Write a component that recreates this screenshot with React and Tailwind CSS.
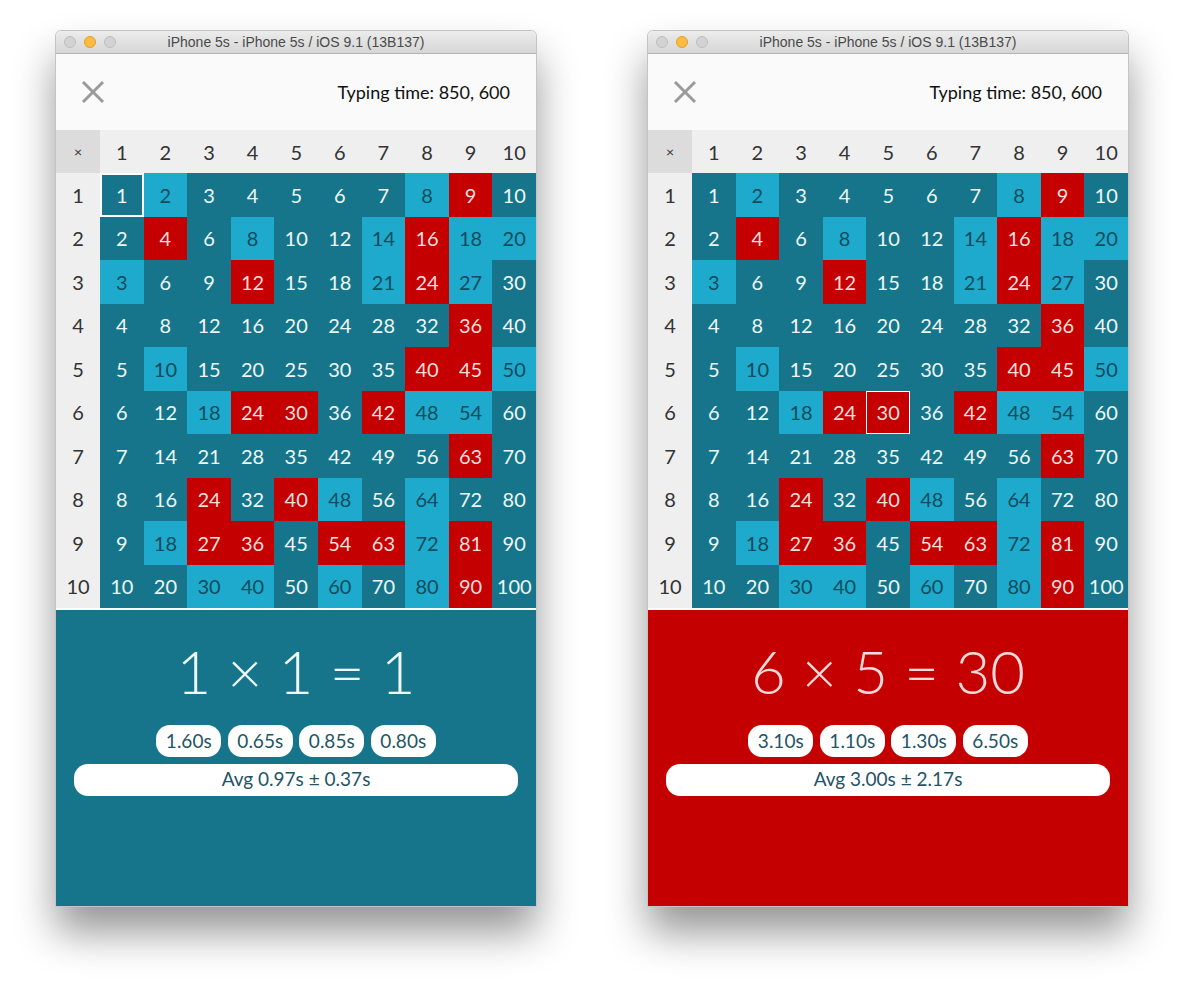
import React from 'react';

// d = dark teal, l = light blue, r = red
const PATTERN = [
  'dldddddlrd',
  'drdlddlrll',
  'lddrddlrld',
  'ddddddddrd',
  'dldddddrrl',
  'ddlrrdrlld',
  'ddddddddrd',
  'ddrdrldldd',
  'dlrrdrrlrd',
  'ddlldldlrd',
];

const cellStyles = {
  d: 'bg-[#16758a] text-[#eef8fa]',
  l: 'bg-[#1eaacd] text-[#0f4c5c]',
  r: 'bg-[#c40000] text-[#ffdede]',
};

const XIcon = () => (
  <svg width="24" height="24" viewBox="0 0 24 24" className="text-[#9a9a9a]">
    <path d="M2 2 L22 22 M22 2 L2 22" stroke="currentColor" strokeWidth="3" fill="none" />
  </svg>
);

const Window = ({ sel, selBorder, panelBg, eqColor, equation, times, avg }) => {
  const cols = [1, 2, 3, 4, 5, 6, 7, 8, 9, 10];
  return (
    <div className="w-[480px] flex flex-col rounded-t-[5px] overflow-hidden ring-1 ring-[#c4c4c4] shadow-[0_26px_42px_rgba(0,0,0,0.42)]">
      {/* title bar */}
      <div className="h-[23px] flex items-center bg-gradient-to-b from-[#ececec] to-[#d6d6d6] border-b border-[#b4b4b4]">
        <div className="flex items-center gap-[8px] pl-[8px]">
          <span className="w-[12px] h-[12px] rounded-full bg-[#d3d3d3] border border-[#bcbcbc]" />
          <span className="w-[12px] h-[12px] rounded-full bg-[#fdbc40] border border-[#de9f34]" />
          <span className="w-[12px] h-[12px] rounded-full bg-[#d3d3d3] border border-[#bcbcbc]" />
        </div>
        <div className="flex-1 text-center pr-[60px] text-[14px] text-[#4a4a4a]" style={{ fontFamily: '"Liberation Sans", Arial, sans-serif' }}>
          iPhone 5s - iPhone 5s / iOS 9.1 (13B137)
        </div>
      </div>

      <div style={{ fontFamily: 'Lato, "Noto Sans", sans-serif' }}>
        {/* header */}
        <div className="h-[76px] bg-[#fafafa] flex items-center justify-between pl-[25px] pr-[26px]">
          <XIcon />
          <span className="text-[18px] text-[#111]">Typing time: 850, 600</span>
        </div>

        {/* table */}
        <div className="grid grid-cols-[44px_repeat(10,1fr)] bg-[#efefef]">
          <div className="h-[43px] bg-[#dcdcdc] flex items-center justify-center text-[14px] text-[#333]">×</div>
          {cols.map((c) => (
            <div key={c} className="h-[43px] flex items-center justify-center text-[20px] text-[#333]">{c}</div>
          ))}
          {cols.map((r) => (
            <React.Fragment key={r}>
              <div className="h-[43.5px] flex items-center justify-center text-[20px] text-[#333]">{r}</div>
              {cols.map((c) => {
                const t = PATTERN[r - 1][c - 1];
                const isSel = sel[0] === r && sel[1] === c;
                return (
                  <div
                    key={c}
                    className={`h-[43.5px] flex items-center justify-center text-[20px] ${cellStyles[t]} ${isSel ? selBorder : ''}`}
                  >
                    {r * c}
                  </div>
                );
              })}
            </React.Fragment>
          ))}
        </div>
        <div className="h-[2px] bg-white" />

        {/* bottom panel */}
        <div className={`h-[296px] flex flex-col items-center pt-[26px] ${panelBg}`}>
          <div className={`text-[60px] leading-[70px] font-light ${eqColor}`}>{equation}</div>
          <div className="flex gap-[6.5px] mt-[19px]">
            {times.map((t) => (
              <div key={t} className="w-[65px] h-[32px] rounded-[14px] bg-white flex items-center justify-center text-[19px] text-[#1f5566]">
                {t}
              </div>
            ))}
          </div>
          <div className="w-[444px] h-[32px] mt-[6.5px] rounded-[14px] bg-white flex items-center justify-center text-[19px] text-[#1f5566]">
            {avg}
          </div>
        </div>
      </div>
    </div>
  );
};

export default function App() {
  return (
    <div className="w-[1184px] h-[986px] bg-white flex items-start gap-[112px] pl-[56px] pt-[31px]">
      <Window
        sel={[1, 1]}
        selBorder="border-2 border-white"
        panelBg="bg-[#16758a]"
        eqColor="text-[#eef9fb]"
        equation="1 × 1 = 1"
        times={['1.60s', '0.65s', '0.85s', '0.80s']}
        avg="Avg 0.97s ± 0.37s"
      />
      <Window
        sel={[6, 5]}
        selBorder="border-[1.5px] border-white"
        panelBg="bg-[#c40000]"
        eqColor="text-[#ffdada]"
        equation="6 × 5 = 30"
        times={['3.10s', '1.10s', '1.30s', '6.50s']}
        avg="Avg 3.00s ± 2.17s"
      />
    </div>
  );
}
